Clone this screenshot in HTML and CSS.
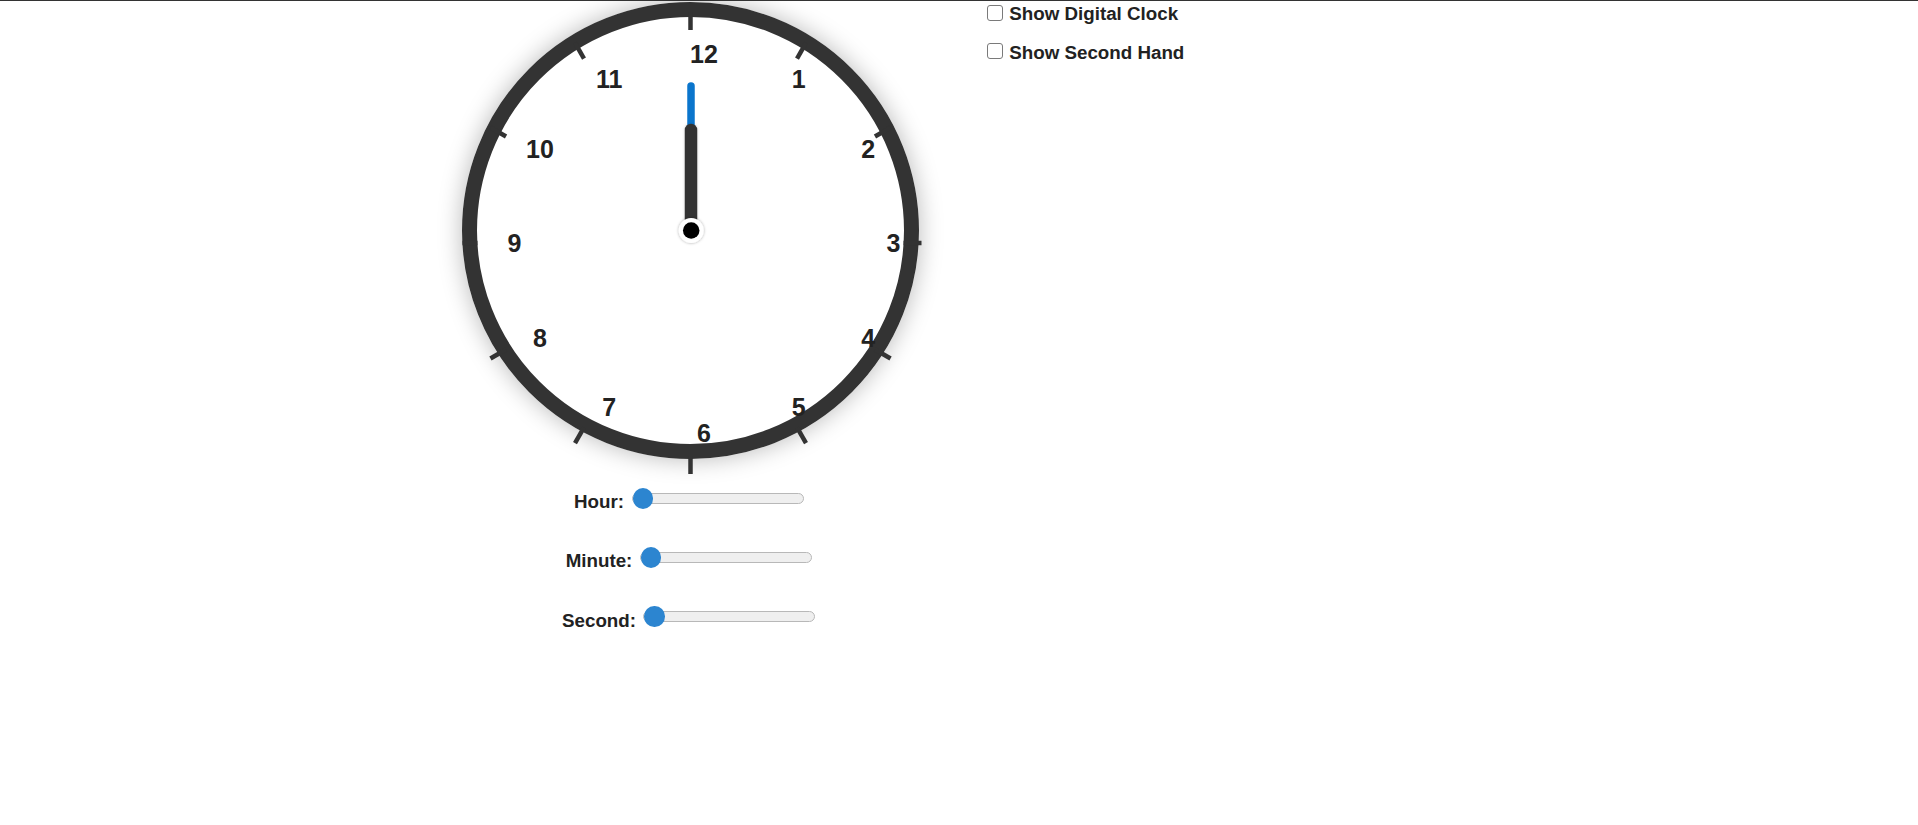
FILE: index.html
```html
<!DOCTYPE html>
<html lang="en">
<head>
<meta charset="utf-8">
<title>Analog Clock</title>
<link rel="stylesheet" href="styles.css">
</head>
<body>
<main class="page">
  <section class="clock-col">
    <div class="clock">
      <svg class="face" width="457" height="457" viewBox="0 0 457 457" aria-label="Clock">
        <defs>
          <filter id="dotShadow" x="-50%" y="-50%" width="200%" height="200%">
            <feDropShadow dx="0" dy="0" stdDeviation="1.6" flood-color="#000" flood-opacity="0.35"/>
          </filter>
          <filter id="handShadow" filterUnits="userSpaceOnUse" x="205" y="105" width="48" height="140">
            <feDropShadow dx="0" dy="0" stdDeviation="1.5" flood-color="#000" flood-opacity="0.18"/>
          </filter>
        </defs>
        <circle class="ring" cx="228.5" cy="228.5" r="221"/>
        <g class="ticks">
          <line x1="228.5" y1="10" x2="228.5" y2="28" transform="rotate(0 228.5 241)"/>
          <line x1="228.5" y1="10" x2="228.5" y2="28" transform="rotate(30 228.5 241)"/>
          <line x1="228.5" y1="10" x2="228.5" y2="28" transform="rotate(60 228.5 241)"/>
          <line x1="228.5" y1="10" x2="228.5" y2="28" transform="rotate(90 228.5 241)"/>
          <line x1="228.5" y1="10" x2="228.5" y2="28" transform="rotate(120 228.5 241)"/>
          <line x1="228.5" y1="10" x2="228.5" y2="28" transform="rotate(150 228.5 241)"/>
          <line x1="228.5" y1="10" x2="228.5" y2="28" transform="rotate(180 228.5 241)"/>
          <line x1="228.5" y1="10" x2="228.5" y2="28" transform="rotate(210 228.5 241)"/>
          <line x1="228.5" y1="10" x2="228.5" y2="28" transform="rotate(240 228.5 241)"/>
          <line x1="228.5" y1="13" x2="228.5" y2="28" transform="rotate(270 228.5 241)"/>
          <line x1="228.5" y1="10" x2="228.5" y2="28" transform="rotate(300 228.5 241)"/>
          <line x1="228.5" y1="10" x2="228.5" y2="28" transform="rotate(330 228.5 241)"/>
        </g>
        <g class="nums">
          <text x="336.75" y="86.2">1</text>
          <text x="406.1" y="155.5">2</text>
          <text x="431.5" y="250.3">3</text>
          <text x="406.1" y="345">4</text>
          <text x="336.75" y="414.4">5</text>
          <text x="242" y="439.8">6</text>
          <text x="147.25" y="414.4">7</text>
          <text x="77.9" y="345">8</text>
          <text x="52.5" y="250.3">9</text>
          <text x="77.9" y="155.5">10</text>
          <text x="147.25" y="86.2">11</text>
          <text x="242" y="60.8">12</text>
        </g>
        <line class="hand-minute" x1="229" y1="84" x2="229" y2="228.5"/>
        <line class="hand-hour" x1="229" y1="128" x2="229" y2="228.5"/>
        <circle class="pin" cx="229.2" cy="228.5" r="12.5"/>
        <circle class="pin-core" cx="229.2" cy="228.5" r="8.25"/>
      </svg>
    </div>
    <div class="sliders">
      <div class="slider-row"><label for="hour">Hour:</label><input type="range" id="hour" min="0" max="11" value="0"></div>
      <div class="slider-row"><label for="minute">Minute:</label><input type="range" id="minute" min="0" max="59" value="0"></div>
      <div class="slider-row"><label for="second">Second:</label><input type="range" id="second" min="0" max="59" value="0"></div>
    </div>
  </section>
  <section class="options">
    <label class="option"><input type="checkbox"><span>Show Digital Clock</span></label>
    <label class="option"><input type="checkbox"><span>Show Second Hand</span></label>
  </section>
</main>
</body>
</html>
```

FILE: styles.css
```css
html, body {
  background: #fff;
}
body {
  margin: 0;
  border-top: 1px solid #333;
}
.page {
  display: flex;
  align-items: flex-start;
  padding-left: 461.5px;
  font-family: "Liberation Sans", Arial, sans-serif;
  font-weight: bold;
  font-size: 18.75px;
  color: #222;
}
.clock-col {
  width: 457px;
  flex-shrink: 0;
  display: flex;
  flex-direction: column;
  align-items: center;
  padding-top: 0.5px;
}
.clock {
  width: 457px;
  height: 457px;
  border-radius: 50%;
  background: #fff;
  box-shadow: 0 0 25px rgba(0, 0, 0, 0.28);
}
.face {
  display: block;
  overflow: visible;
}
.ring {
  fill: #fff;
  stroke: #333;
  stroke-width: 15;
}
.ticks line {
  stroke: #333;
  stroke-width: 4.5;
}
.nums text {
  font-family: "Liberation Sans", Arial, sans-serif;
  font-weight: bold;
  font-size: 25px;
  fill: #222;
  text-anchor: middle;
}
.hand-minute {
  stroke: #0a75cc;
  stroke-width: 7.5;
  stroke-linecap: round;
}
.hand-hour {
  stroke: #333;
  stroke-width: 12.5;
  stroke-linecap: round;
  filter: url(#handShadow);
}
.pin {
  fill: #fff;
  filter: url(#dotShadow);
}
.pin-core {
  fill: #000;
}
.sliders {
  margin-top: 28.8px;
  display: flex;
  flex-direction: column;
  gap: 37.2px;
}
.slider-row {
  height: 22px;
  display: flex;
  align-items: center;
  justify-content: center;
  gap: 5px;
}
.slider-row label {
  margin-top: 8px;
  white-space: nowrap;
}
.slider-row input[type="range"] {
  -webkit-appearance: none;
  appearance: none;
  width: 172px;
  height: 21px;
  margin: 0 2.5px;
  padding: 0;
  background: transparent;
}
.slider-row input[type="range"]::-webkit-slider-runnable-track {
  box-sizing: border-box;
  height: 11px;
  background: #efefef;
  border: 1px solid #b8b8b8;
  border-radius: 6px;
}
.slider-row input[type="range"]::-webkit-slider-thumb {
  -webkit-appearance: none;
  appearance: none;
  width: 20.5px;
  height: 20.5px;
  border: none;
  border-radius: 50%;
  background: #2c85d0;
  margin-top: -5.75px;
}
.options {
  margin-left: 68.8px;
  padding-top: 2px;
  display: flex;
  flex-direction: column;
  gap: 16.5px;
}
.option {
  display: flex;
  align-items: flex-start;
  white-space: nowrap;
}
.option input[type="checkbox"] {
  -webkit-appearance: none;
  appearance: none;
  flex-shrink: 0;
  box-sizing: border-box;
  width: 16px;
  height: 16px;
  margin: 1.5px 6px 0 0;
  border: 1.2px solid #7a7a7a;
  border-radius: 3px;
  background: #fff;
}
```
